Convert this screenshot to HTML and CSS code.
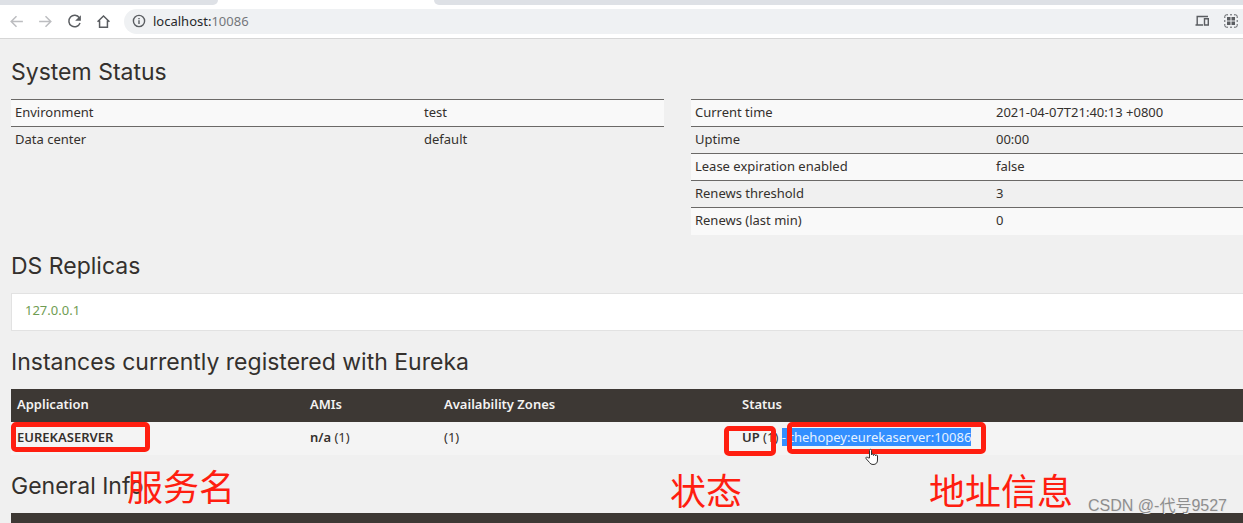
FILE: index.html
```html
<!DOCTYPE html>
<html lang="en">
<head>
<meta charset="utf-8">
<meta name="viewport" content="width=device-width, initial-scale=1">
<title>Eureka</title>
<link rel="stylesheet" href="styles.css">
</head>
<body>
<header class="browser">
  <div class="tabs"><div class="tab-side tab-left"></div><div class="tab-active"></div><div class="tab-side tab-right"></div></div>
  <div class="toolbar">
    <nav class="nav" aria-label="Browser">
      <button class="icon-button faded" aria-label="Back"><svg viewBox="0 0 16 16"><path d="M14 8H3M8 3L3 8l5 5"/></svg></button>
      <button class="icon-button faded" aria-label="Forward"><svg viewBox="0 0 16 16"><path d="M2 8h11M8 3l5 5-5 5"/></svg></button>
      <button class="icon-button" aria-label="Reload"><svg viewBox="0 0 16 16"><path d="M12.6 4.6A5.4 5.4 0 1 0 13.2 9.4"/><path class="solid" d="M14 2v5.4H8.6z"/></svg></button>
      <button class="icon-button" aria-label="Home"><svg viewBox="0 0 16 16"><path d="M2.4 8.2L8 2.8l5.600 5.400M4.300 7v6.400h7.400V7"/></svg></button>
    </nav>
    <div class="address">
      <svg class="info" viewBox="0 0 16 16"><circle cx="8" cy="8" r="5.600"/><path d="M8 7.300v3.700M8 4.900v1.400"/></svg>
      <span class="url">localhost:<span class="port">10086</span></span>
      <button class="icon-button small" aria-label="Send to your devices"><svg viewBox="0 0 16 16"><path d="M14 3.500H3.200v8M1.500 12H9M10.500 5.700h3.800V12h-3.800z"/></svg></button>
      <button class="icon-button small" aria-label="QR code"><svg viewBox="0 0 16 16"><path class="thin" d="M1.800 5V3.500q0-1.700 1.700-1.700H5M7 1.800h2M11 1.800h1.500q1.700 0 1.700 1.700V5M14.200 7v2M14.200 11v1.500q0 1.700-1.700 1.700H11M9 14.200H7M5 14.200H3.500q-1.700 0-1.700-1.700V11M1.800 9V7"/><path class="solid" d="M4 4h3.500v3.500H4zM8.500 4H12v3.500H8.500zM4 8.500h3.500V12H4zM8.500 8.500H12V12H8.500z"/></svg></button>
    </div>
  </div>
</header>
<main class="page">
  <h1>System Status</h1>
  <div class="status">
    <table class="facts facts-left">
      <tbody>
        <tr><td>Environment</td><td>test</td></tr>
        <tr><td>Data center</td><td>default</td></tr>
      </tbody>
    </table>
    <table class="facts facts-right">
      <tbody>
        <tr><td>Current time</td><td>2021-04-07T21:40:13 +0800</td></tr>
        <tr><td>Uptime</td><td>00:00</td></tr>
        <tr><td>Lease expiration enabled</td><td>false</td></tr>
        <tr><td>Renews threshold</td><td>3</td></tr>
        <tr><td>Renews (last min)</td><td>0</td></tr>
      </tbody>
    </table>
  </div>
  <h1>DS Replicas</h1>
  <ul class="replicas"><li><a href="#">127.0.0.1</a></li></ul>
  <h1>Instances currently registered with Eureka</h1>
  <table class="grid instances">
    <thead><tr><th class="c-app">Application</th><th class="c-ami">AMIs</th><th class="c-zone">Availability Zones</th><th>Status</th></tr></thead>
    <tbody><tr>
      <td><b class="anchor">EUREKASERVER<span class="mark mark-app"></span><span class="note note-app" lang="zh">服务名</span></b></td>
      <td><b>n/a</b> (1)</td>
      <td>(1)</td>
      <td><span class="anchor"><b>UP</b> (1) <a class="selected" href="#">- thehopey:eurekaserver:10086</a><span class="mark mark-up"></span><span class="mark mark-host"></span><span class="note note-up" lang="zh">状态</span><span class="note note-host" lang="zh">地址信息</span>
        <svg class="hand" viewBox="0 0 16 18"><path d="M5.500 10V2.500q0-1.200 1-1.200t1 1.200V7q0-1 1-1t1 1v.5q0-1 1-1t1 1V8q0-1 1-1t1 1v4q0 4.500-4.500 4.500-2.500 0-3.500-2L2.200 10.800q-.8-1.300.3-1.700.8-.2 1.500.7z"/></svg></span></td>
    </tr></tbody>
  </table>
  <h1>General Info</h1>
  <table class="grid">
    <thead><tr><th class="c-name">Name</th><th>Value</th></tr></thead>
  </table>
</main>
<div class="watermark">CSDN @-代号9527</div>
</body>
</html>
```

FILE: styles.css
```css
* { box-sizing: border-box; }
body {
  margin: 0;
  height: 100vh;
  overflow: hidden;
  position: relative;
  background: #f0f0f0;
  color: #34302d;
  font: 13px/18px "Noto Sans", "Noto Sans CJK SC", sans-serif;
}
.browser { background: #fff; border-bottom: 1px solid #d6d6d6; }
.tabs { display: flex; height: 5px; }
.tab-side { background: #dee1e6; }
.tab-left { width: 218px; border-bottom-right-radius: 5px; }
.tab-active { width: 216px; }
.tab-right { flex: 1; border-bottom-left-radius: 5px; }
.toolbar { display: flex; align-items: center; gap: 12px; height: 33px; padding: 0 0 1px 8px; }
.nav { display: flex; gap: 12px; }
.icon-button { display: flex; padding: 0; border: 0; background: none; color: #5a5d61; }
.icon-button svg { width: 17px; height: 17px; }
.small svg { width: 16px; height: 16px; }
.faded { color: #bcbdc0; }
svg { fill: none; stroke: currentColor; stroke-width: 1.4; }
svg .solid { fill: currentColor; stroke: none; }
svg .thin { stroke-width: 1; }
.address {
  flex: 1;
  display: flex;
  align-items: center;
  gap: 13px;
  height: 25px;
  padding: 0 4px 0 7px;
  border-radius: 13px 0 0 13px;
  background: #eff1f3;
}
.info { width: 16px; height: 16px; color: #5a5d61; }
.url { flex: 1; margin-left: -7px; color: #26282b; }
.port { color: #74777b; }
.page { padding: 2px 0 0 11px; }
h1 {
  margin: 0;
  padding: 18px 0 14px;
  font: 400 23px/26px Inter, sans-serif;
}
.status { display: flex; align-items: flex-start; gap: 27px; }
table { border-collapse: collapse; table-layout: fixed; width: 100%; }
td, th { text-align: left; }
.facts-left { width: 53%; }
.facts-right { flex: 1; width: 0; }
.facts-right td:first-child { width: 301px; }
.facts-left td:first-child { width: 409px; }
.facts td { height: 27px; padding: 3px 4px 5px; border-top: 1px solid #6b6967; }
.facts tr:nth-child(odd) { background: #f9f9f9; }
.facts tr:nth-child(even) { background: #f0f0f0; }
.replicas {
  margin: 0;
  padding: 7px 13px 11px;
  border: 1px solid #e2e2e2;
  border-right: 0;
  background: #fff;
  list-style: none;
}
.replicas a { color: #6f9c52; text-decoration: none; }
.grid th { height: 33px; padding: 6px 6px 9px; background: #3d3834; color: #f4f3f2; font-weight: 600; }
.grid td { height: 33px; padding: 6px 6px 9px; }
.instances tbody { background: #f4f4f4; }
.c-app { width: 293px; }
.c-ami { width: 134px; }
.c-zone { width: 298px; }
.c-name { width: 46%; }
b { font-weight: 600; }
.anchor { position: relative; white-space: nowrap; }
.selected { padding: 0; background: #338fff; color: #e6f2ff; text-decoration: none; }
.mark { position: absolute; border: 5px solid #ff1e10; border-radius: 5px; }
.mark-app { left: -6px; top: -6px; width: 139px; height: 30px; }
.mark-up { left: -18px; top: -2px; width: 52px; height: 30px; }
.mark-host { left: 45px; top: -6px; width: 199px; height: 32px; }
.note { position: absolute; color: #ff1e10; font: 400 36px/40px "Noto Sans CJK SC", sans-serif; }
.note-app { left: 110px; top: 37px; }
.note-up { left: -72px; top: 41px; }
.note-host { left: 187px; top: 41px; }
.hand { position: absolute; left: 122px; top: 20px; width: 16px; height: 18px; fill: #fff; color: #333; stroke-width: 1; }
.watermark {
  position: absolute;
  right: 16px;
  bottom: 5px;
  color: #8e8e8e;
  font: 16px/24px "Liberation Sans", "Noto Sans CJK SC", sans-serif;
  text-shadow: 1px 1px #e8e8e8;
}
```
